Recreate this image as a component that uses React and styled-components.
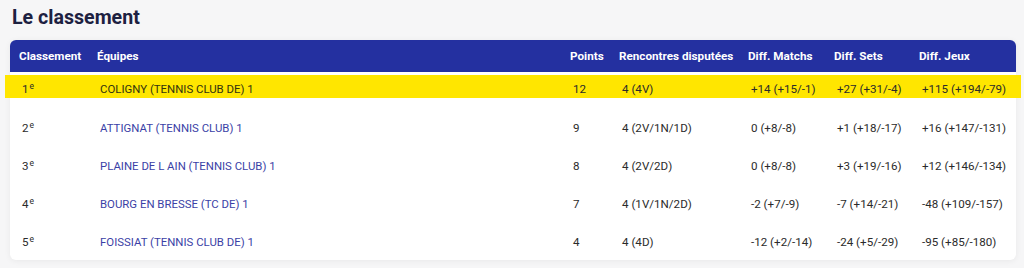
import { styled, createGlobalStyle } from 'styled-components';

const GlobalStyle = createGlobalStyle`
  html, body {
    margin: 0;
    padding: 0;
    background: #ffffff;
    font-family: Roboto, "Liberation Sans", Arial, sans-serif;
  }
`;

const Page = styled.div`
  width: 1024px;
  height: 268px;
  padding: 6px 8px 0 10px;
  box-sizing: border-box;
  overflow: hidden;
  background: #f6f6f7;
`;

const Title = styled.h2`
  margin: 0 0 10px 2px;
  font-size: 19.6px;
  line-height: 24px;
  font-weight: 700;
  color: #1d2141;
`;

const Card = styled.div`
  background: #fff;
  border-radius: 6px;
  box-shadow: 0 1px 6px rgba(0, 0, 0, 0.06);
  height: 220px;
`;

const columns = '78px 473px 49px 129px 86px 85px 1fr';

const HeadRow = styled.div`
  display: grid;
  grid-template-columns: ${columns};
  height: 32px;
  align-items: center;
  background: #2430a0;
  border-radius: 6px 6px 0 0;
  color: #fff;
  font-size: 11.7px;
  font-weight: 700;
`;

const HeadCell = styled.div`
  padding-left: 9px;
  white-space: nowrap;
`;

const Row = styled.div`
  display: grid;
  grid-template-columns: ${columns};
  align-items: center;
  font-size: 11.6px;
  color: #2b2b2b;
  height: ${(p) => (p.$highlight ? '23px' : '38px')};
  background: ${(p) => (p.$highlight ? '#ffe600' : 'transparent')};
  margin: ${(p) => (p.$highlight ? '3px -5px 11px -5px' : '0')};
  padding: ${(p) => (p.$highlight ? '4px 5px 0 5px' : '0')};
  box-sizing: border-box;
`;

const Cell = styled.div`
  padding-left: 12px;
  white-space: nowrap;
`;

const Team = styled(Cell)`
  font-size: 11.4px;
  color: ${(p) => (p.$highlight ? '#33330f' : '#3b3fa6')};
`;

const Sup = styled.span`
  font-size: 8.5px;
  line-height: 0;
  vertical-align: 4px;
  margin-left: 1px;
`;

const rows = [
  ['1', 'COLIGNY (TENNIS CLUB DE) 1', '12', '4 (4V)', '+14 (+15/-1)', '+27 (+31/-4)', '+115 (+194/-79)'],
  ['2', 'ATTIGNAT (TENNIS CLUB) 1', '9', '4 (2V/1N/1D)', '0 (+8/-8)', '+1 (+18/-17)', '+16 (+147/-131)'],
  ['3', 'PLAINE DE L AIN (TENNIS CLUB) 1', '8', '4 (2V/2D)', '0 (+8/-8)', '+3 (+19/-16)', '+12 (+146/-134)'],
  ['4', 'BOURG EN BRESSE (TC DE) 1', '7', '4 (1V/1N/2D)', '-2 (+7/-9)', '-7 (+14/-21)', '-48 (+109/-157)'],
  ['5', 'FOISSIAT (TENNIS CLUB DE) 1', '4', '4 (4D)', '-12 (+2/-14)', '-24 (+5/-29)', '-95 (+85/-180)'],
];

const headers = ['Classement', 'Équipes', 'Points', 'Rencontres disputées', 'Diff. Matchs', 'Diff. Sets', 'Diff. Jeux'];

export default function App() {
  return (
    <>
      <GlobalStyle />
      <Page>
        <Title>Le classement</Title>
        <Card>
          <HeadRow>
            {headers.map((h) => (
              <HeadCell key={h}>{h}</HeadCell>
            ))}
          </HeadRow>
          {rows.map((r, i) => {
            const hl = i === 0;
            return (
              <Row key={r[1]} $highlight={hl}>
                <Cell>
                  {r[0]}
                  <Sup>e</Sup>
                </Cell>
                <Team $highlight={hl}>{r[1]}</Team>
                <Cell>{r[2]}</Cell>
                <Cell>{r[3]}</Cell>
                <Cell>{r[4]}</Cell>
                <Cell>{r[5]}</Cell>
                <Cell>{r[6]}</Cell>
              </Row>
            );
          })}
        </Card>
      </Page>
    </>
  );
}
